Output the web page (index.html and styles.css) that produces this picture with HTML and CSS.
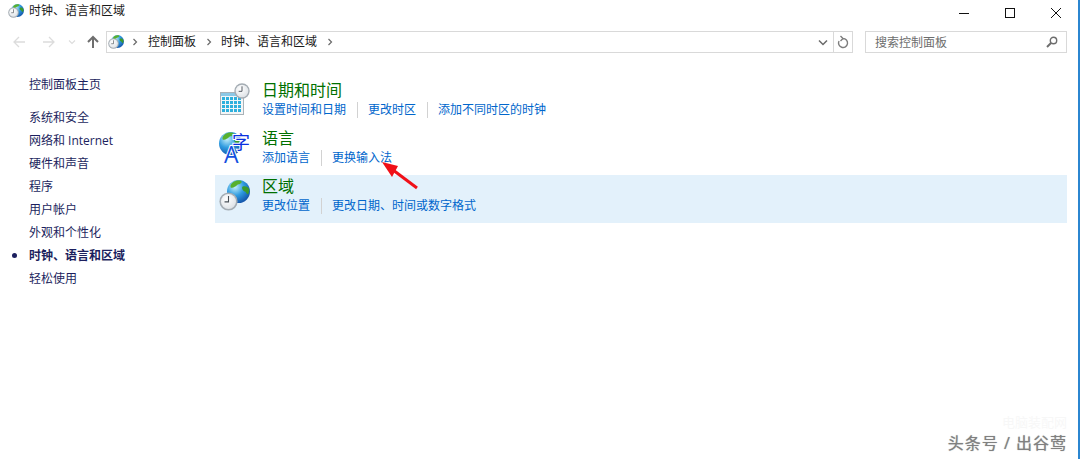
FILE: index.html
```html
<!DOCTYPE html>
<html lang="zh-CN">
<head>
  <meta charset="UTF-8" />
  <title>时钟、语言和区域</title>
  <link rel="stylesheet" href="styles.css">
</head>
<body>
  <svg class="defs" width="0" height="0">
    <defs>
      <radialGradient id="sea" cx="0.35" cy="0.3" r="0.85">
        <stop offset="0" stop-color="#c4f0fa" />
        <stop offset="0.45" stop-color="#2f9be0" />
        <stop offset="1" stop-color="#0b3f9a" />
      </radialGradient>
      <radialGradient id="face" cx="0.4" cy="0.35" r="0.8">
        <stop offset="0" stop-color="#ffffff" />
        <stop offset="1" stop-color="#d8dde2" />
      </radialGradient>
      <symbol id="globe" viewBox="0 0 24 24">
        <circle cx="12" cy="12" r="12" fill="url(#sea)" />
        <path d="M6 2.500c3-2 6-2.500 9-1.500 1 2-1 3-3 3.500-2 .5-2 2-4 2.500-1 1-2 1-4 1-1-2 0-4 2-5.500z" fill="#57b02e" />
        <path d="M16 7c3-1 5 0 7 2 .5 2 0 4-1 6-2-1-2-2-3-3-2 0-4-3-3-5z" fill="#3c9a2c" />
      </symbol>
      <symbol id="clock" viewBox="0 0 24 24">
        <circle cx="12" cy="12" r="11.500" fill="#a4acb3" />
        <circle cx="12" cy="12" r="9.500" fill="url(#face)" />
        <path d="M12 5v7.500h-5" fill="none" stroke="#4a5158" stroke-width="1.400" />
      </symbol>
      <symbol id="chev" viewBox="0 0 6 8">
        <path d="M1.500 1l3 3-3 3" fill="none" stroke="#6a6a6a" stroke-width="1.200" />
      </symbol>
    </defs>
  </svg>

  <div class="window">
    <header class="titlebar">
      <svg class="small-icon" viewBox="0 0 16 16">
        <use href="#globe" x="3" y="1" width="13" height="13" />
        <use href="#clock" x="0" y="4" width="11" height="11" />
      </svg>
      <span class="title-text">时钟、语言和区域</span>
      <div class="win-buttons">
        <svg class="win-btn" viewBox="0 0 46 20"><path d="M18 10.500h10" stroke="#111" fill="none" /></svg>
        <svg class="win-btn" viewBox="0 0 46 20"><rect x="18.500" y="5.500" width="9" height="9" stroke="#111" fill="none" /></svg>
        <svg class="win-btn" viewBox="0 0 46 20"><path d="M18 5l10 10M28 5l-10 10" stroke="#111" fill="none" /></svg>
      </div>
    </header>

    <nav class="toolbar">
      <div class="nav-buttons">
        <svg class="nav-arrow" viewBox="0 0 14 14"><path d="M13 7H2M7 2L2 7l5 5" fill="none" stroke="#dcdcdc" stroke-width="1.300" /></svg>
        <svg class="nav-arrow" viewBox="0 0 14 14"><path d="M1 7h11M7 2l5 5-5 5" fill="none" stroke="#dcdcdc" stroke-width="1.300" /></svg>
        <svg class="nav-down" viewBox="0 0 8 6"><path d="M1 1.500l3 3 3-3" fill="none" stroke="#dcdcdc" stroke-width="1.100" /></svg>
        <svg class="nav-arrow nav-up" viewBox="0 0 14 14"><path d="M7 13V2M2 7l5-5 5 5" fill="none" stroke="#6e6e6e" stroke-width="2" /></svg>
      </div>
      <div class="address">
        <svg class="small-icon" viewBox="0 0 16 16">
          <use href="#globe" x="3" y="1" width="13" height="13" />
          <use href="#clock" x="0" y="4" width="11" height="11" />
        </svg>
        <svg class="crumb-sep first" viewBox="0 0 6 8"><use href="#chev" /></svg>
        <span class="crumb">控制面板</span>
        <svg class="crumb-sep" viewBox="0 0 6 8"><use href="#chev" /></svg>
        <span class="crumb">时钟、语言和区域</span>
        <svg class="crumb-sep" viewBox="0 0 6 8"><use href="#chev" /></svg>
        <svg class="addr-down" viewBox="0 0 10 7"><path d="M1 1.500l4 4 4-4" fill="none" stroke="#6a6a6a" stroke-width="1.500" /></svg>
        <div class="addr-refresh">
          <svg class="refresh-icon" viewBox="0 0 12 14"><path d="M6 3.500A4.500 4.500 0 1 1 2 6M3.500 1L6 3.500 3.500 6" fill="none" stroke="#7d7d7d" stroke-width="1.400" /></svg>
        </div>
      </div>
      <div class="search">
        <span class="search-text">搜索控制面板</span>
        <svg class="search-icon" viewBox="0 0 12 12"><circle cx="7.500" cy="4.500" r="3.200" fill="none" stroke="#6d6d6d" stroke-width="1.400" /><path d="M5 7L1 11" stroke="#6d6d6d" stroke-width="2" /></svg>
      </div>
    </nav>

    <div class="main">
      <aside class="sidebar">
        <a class="side-home">控制面板主页</a>
        <a class="side-link">系统和安全</a>
        <a class="side-link">网络和 Internet</a>
        <a class="side-link">硬件和声音</a>
        <a class="side-link">程序</a>
        <a class="side-link">用户帐户</a>
        <a class="side-link">外观和个性化</a>
        <a class="side-link current">时钟、语言和区域</a>
        <a class="side-link">轻松使用</a>
      </aside>

      <section class="content">
        <div class="cat">
          <svg class="cat-icon" viewBox="0 0 32 32">
            <defs>
              <pattern id="cells" width="4" height="4" patternUnits="userSpaceOnUse" x="4" y="14">
                <rect width="3" height="3" fill="#2fb0dd" />
              </pattern>
            </defs>
            <rect x="2.500" y="9.500" width="23" height="22" fill="#f4f6f7" stroke="#a9b2b8" />
            <rect x="3" y="10" width="22" height="3" fill="#8cc8e6" />
            <rect x="4" y="14" width="20" height="16" fill="url(#cells)" />
            <use href="#clock" x="16" y="0" width="16" height="16" />
          </svg>
          <div class="cat-body">
            <h2 class="cat-title">日期和时间</h2>
            <div class="cat-links">
              <a>设置时间和日期</a><a>更改时区</a><a>添加不同时区的时钟</a>
            </div>
          </div>
        </div>

        <div class="cat">
          <svg class="cat-icon" viewBox="0 0 32 32">
            <use href="#globe" x="1" y="1" width="23" height="23" />
            <text class="icon-zi" x="14" y="18">字</text>
            <text class="icon-a" x="6" y="32">A</text>
          </svg>
          <div class="cat-body">
            <h2 class="cat-title">语言</h2>
            <div class="cat-links">
              <a>添加语言</a><a>更换输入法</a>
            </div>
          </div>
        </div>

        <div class="cat selected">
          <svg class="cat-icon" viewBox="0 0 32 32">
            <use href="#globe" x="9" y="1" width="23" height="23" />
            <use href="#clock" x="1" y="13" width="19" height="19" />
          </svg>
          <div class="cat-body">
            <h2 class="cat-title">区域</h2>
            <div class="cat-links">
              <a>更改位置</a><a>更改日期、时间或数字格式</a>
            </div>
          </div>
        </div>
      </section>
    </div>
  </div>

  <!-- 红色箭头标注 -->
  <svg class="annot-arrow" viewBox="0 0 40 32">
    <path d="M36 27L12 9" stroke="#f01018" stroke-width="3" fill="none" />
    <path d="M1 1l16 4-6 11z" fill="#f01018" />
  </svg>

  <div class="watermark"><span class="wm-back">电脑装配网</span>头条号 / 出谷莺</div>
</body>
</html>
```

FILE: styles.css
```css
* {
  box-sizing: border-box;
}

html,
body {
  margin: 0;
  height: 100%;
}

body {
  font-family: "Open Sans", "Noto Sans CJK SC", sans-serif;
  font-size: 12px;
  background: #fff;
  color: #1a1a1a;
  overflow: hidden;
  position: relative;
}

.defs {
  position: absolute;
}

.window {
  height: 459px;
  border-right: 2px solid #2b86d0;
  display: flex;
  flex-direction: column;
}

/* Barra de titulo */
.titlebar {
  height: 31px;
  padding: 3px 0 0 8px;
  display: flex;
  align-items: flex-start;
}

.small-icon {
  width: 16px;
  height: 16px;
  flex: none;
}

.title-text {
  margin-left: 5px;
  line-height: 16px;
}

.win-buttons {
  margin-left: auto;
  margin-right: -1px;
  display: flex;
}

.win-btn {
  width: 46px;
  height: 20px;
  display: block;
}

/* Barra de navegacion */
.toolbar {
  height: 22px;
  display: flex;
  align-items: stretch;
  padding-right: 11px;
}

.nav-buttons {
  width: 106px;
  padding-left: 12px;
  display: flex;
  align-items: center;
}

.nav-arrow {
  width: 14px;
  height: 14px;
  flex: none;
  margin-right: 16px;
}

.nav-down {
  width: 8px;
  height: 6px;
  margin-left: -4px;
  margin-right: 10px;
  flex: none;
}

.nav-up {
  margin-right: 0;
}

.address {
  width: 747px;
  border: 1px solid #d9d9d9;
  padding-left: 1px;
  display: flex;
  align-items: center;
}

.crumb {
  color: #1a1a1a;
  margin: 0 10px 0 9px;
  line-height: 20px;
}

.crumb-sep {
  width: 6px;
  height: 8px;
  flex: none;
}

.crumb-sep.first {
  margin: 0 1px 0 8px;
}

.addr-down {
  width: 10px;
  height: 7px;
  margin-left: auto;
  margin-right: 5px;
  flex: none;
}

.addr-refresh {
  width: 19px;
  height: 100%;
  border-left: 1px solid #d9d9d9;
  display: flex;
  align-items: center;
  justify-content: center;
}

.refresh-icon {
  width: 12px;
  height: 14px;
}

.search {
  width: 202px;
  margin-left: 12px;
  border: 1px solid #d9d9d9;
  padding: 0 8px 0 9px;
  display: flex;
  align-items: center;
  justify-content: space-between;
}

.search-text {
  color: #6d6d6d;
}

.search-icon {
  width: 12px;
  height: 12px;
}

/* Contenido */
.main {
  flex: 1;
  display: flex;
}

.sidebar {
  width: 215px;
  padding: 20px 0 0 29px;
  display: flex;
  flex-direction: column;
  flex: none;
}

.sidebar a {
  color: #1c1f5e;
  line-height: 23px;
  height: 23px;
}

.side-home {
  margin-bottom: 10px;
}

.current {
  font-weight: 700;
  position: relative;
}

.current::before {
  content: "";
  position: absolute;
  left: -17px;
  top: 9px;
  width: 5px;
  height: 5px;
  border-radius: 50%;
  background: #1c1f5e;
}

.content {
  width: 852px;
  padding-top: 26px;
}

.cat {
  height: 48px;
  padding: 1px 0 0 3px;
  display: flex;
  align-items: flex-start;
}

.cat.selected {
  background: #e3f1fb;
}

.cat-icon {
  width: 32px;
  height: 32px;
  flex: none;
  margin-top: 3px;
  overflow: visible;
}

.cat-body {
  margin-left: 12px;
}

.cat-title {
  margin: 0;
  font-size: 16px;
  font-weight: 400;
  line-height: 20px;
  color: #007000;
}

.cat-links {
  display: flex;
  line-height: 16px;
  margin-top: 2px;
}

.cat-links a {
  color: #0066cc;
  padding: 0 11px 0 10px;
  border-left: 1px solid #d2d2d2;
}

.cat-links a:first-child {
  padding-left: 0;
  border-left: none;
}

.icon-zi {
  font-size: 18px;
  fill: #0a30e0;
  stroke: #fff;
  stroke-width: 2px;
  paint-order: stroke;
}

.icon-a {
  font-size: 23px;
  fill: #1450e0;
  stroke: #fff;
  stroke-width: 2px;
  paint-order: stroke;
}

/* Anotacion */
.annot-arrow {
  position: absolute;
  left: 381px;
  top: 161px;
  width: 40px;
  height: 32px;
}

.watermark {
  position: absolute;
  right: 13px;
  bottom: 8px;
  font-size: 16px;
  letter-spacing: 1px;
  line-height: 16px;
  color: #808080;
  text-shadow: 0 0 1px #999;
}

.wm-back {
  position: absolute;
  right: 0;
  bottom: 22px;
  font-size: 13px;
  line-height: 13px;
  letter-spacing: 0;
  color: #f7f7f7;
  text-shadow: none;
  white-space: nowrap;
}
```
